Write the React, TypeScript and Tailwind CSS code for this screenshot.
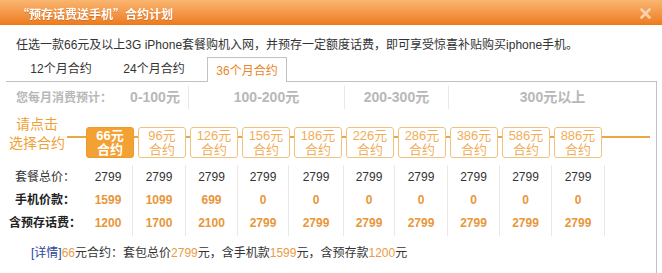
import React from "react";

type Plan = {
	fee: number;
	total: number;
	phone: number;
	deposit: number;
};

const PLANS: Plan[] = [
	{ fee: 66, total: 2799, phone: 1599, deposit: 1200 },
	{ fee: 96, total: 2799, phone: 1099, deposit: 1700 },
	{ fee: 126, total: 2799, phone: 699, deposit: 2100 },
	{ fee: 156, total: 2799, phone: 0, deposit: 2799 },
	{ fee: 186, total: 2799, phone: 0, deposit: 2799 },
	{ fee: 226, total: 2799, phone: 0, deposit: 2799 },
	{ fee: 286, total: 2799, phone: 0, deposit: 2799 },
	{ fee: 386, total: 2799, phone: 0, deposit: 2799 },
	{ fee: 586, total: 2799, phone: 0, deposit: 2799 },
	{ fee: 886, total: 2799, phone: 0, deposit: 2799 },
];

// table columns don't line up exactly with the buttons in the original
const COL_WIDTHS = [
	"w-[48px]",
	"w-[53px] border-l",
	"w-[52px] border-l",
	"w-[51px] border-l",
	"w-[55px] border-l",
	"w-[51px] border-l",
	"w-[53px] border-l",
	"w-[52px] border-l",
	"w-[52px] border-l",
	"w-[53px] border-l",
];

const TABS = ["12个月合约", "24个月合约", "36个月合约"];

function CloseIcon() {
	return (
		<svg width="11" height="11" viewBox="0 0 11 11" className="text-[#fad2ad]">
			<path d="M1.5 1.5 L9.5 9.5 M9.5 1.5 L1.5 9.5" stroke="currentColor" strokeWidth="2.6" strokeLinecap="round" />
		</svg>
	);
}

function PlanButton({ fee, active }: { fee: number; active: boolean }) {
	return (
		<div
			className={`mt-[12px] w-[48px] h-[31px] shrink-0 rounded-[3px] border flex flex-col items-center justify-center text-[13px] leading-[14px] ${
				active
					? "bg-[#f4a134] border-[#f0982c] text-white font-bold"
					: "bg-white border-[#f0c27e] text-[#f1ae5a]"
			}`}
		>
			<span>{fee}元</span>
			<span>合约</span>
		</div>
	);
}

function Connector({ width }: { width: string }) {
	return <div className={`mt-[21px] h-[2px] shrink-0 bg-[#eea546] ${width}`} />;
}

export default function App() {
	const selected = PLANS[0];

	return (
		<div className="w-[662px] h-[273px] overflow-hidden bg-white text-[12px] text-[#333] font-['Liberation_Sans','Noto_Sans_CJK_SC',sans-serif]">
			<div className="h-[25px] flex items-center justify-between pl-[17px] pr-[11px] pt-[2px] bg-gradient-to-b from-[#f9b56f] to-[#ed7a15]">
				<span className="text-white font-bold text-[12px] font-['Noto_Sans_CJK_SC',sans-serif] drop-shadow-[0_1px_0_rgba(160,70,0,0.35)]">
					“预存话费送手机”合约计划
				</span>
				<CloseIcon />
			</div>

			<p className="mt-[12px] pl-[16px] leading-[16px]">
				任选一款66元及以上3G iPhone套餐购机入网，并预存一定额度话费，即可享受惊喜补贴购买iphone手机。
			</p>

			<div className="ml-[6px] w-[651px] mt-[4px]">
				<div className="relative z-10 flex items-end h-[24px] pl-[15px] gap-[13px]">
					{TABS.map((tab, i) =>
						i === 2 ? (
							<div
								key={tab}
								className="w-[80px] h-[25px] -mb-px pt-[1px] flex items-center justify-center bg-white border border-b-0 border-[#c2c2c2] text-[#e98529]"
							>
								{tab}
							</div>
						) : (
							<div key={tab} className="w-[80px] h-[24px] flex items-center justify-center">
								{tab}
							</div>
						),
					)}
				</div>

				<div className="h-[192px] border-t border-r border-[#c2c2c2]">
					<div className="mt-[4px] h-[23px] flex text-[#b8b8b8] font-bold">
						<div className="w-[116px] pl-[10px] flex items-center text-[12px]">您每月消费预计：</div>
						<div className="w-[66px] flex items-center justify-center text-[14px]">0-100元</div>
						<div className="w-[156px] border-l border-[#e8e8e8] flex items-center justify-center text-[14px]">
							100-200元
						</div>
						<div className="w-[104px] border-l border-[#e8e8e8] flex items-center justify-center text-[14px]">
							200-300元
						</div>
						<div className="flex-1 border-l border-[#e8e8e8] flex items-center justify-center text-[14px]">
							300元以上
						</div>
					</div>

					<div className="mt-[6px] flex items-start">
						<div className="ml-[1px] w-[60px] shrink-0 whitespace-nowrap text-center text-[14px] leading-[19px] text-[#f0a135]">
							<div>请点击</div>
							<div>选择合约</div>
						</div>
						<Connector width="w-[19px]" />
						{PLANS.map((plan, i) => (
							<React.Fragment key={plan.fee}>
								{i > 0 && <Connector width="w-[4px]" />}
								<PlanButton fee={plan.fee} active={plan.fee === selected.fee} />
							</React.Fragment>
						))}
						<Connector width="w-[48px]" />
					</div>

					<div className="mt-[7px] flex">
						<div className="w-[78px] pb-[2px] flex flex-col">
							<div className="h-[23px] flex items-center justify-center">套餐总价：</div>
							<div className="h-[23px] flex items-center justify-center font-bold text-[#222]">手机价款：</div>
							<div className="h-[23px] flex items-center justify-center font-bold text-[#222]">含预存话费：</div>
						</div>
						{PLANS.map((plan, i) => (
							<div key={plan.fee} className={`${COL_WIDTHS[i]} border-[#e8e8e8] pb-[2px] flex flex-col`}>
								<div className="h-[23px] flex items-center justify-center">{plan.total}</div>
								<div className="h-[23px] flex items-center justify-center font-bold text-[#e9963b]">{plan.phone}</div>
								<div className="h-[23px] flex items-center justify-center font-bold text-[#e9963b]">{plan.deposit}</div>
							</div>
						))}
						<div className="w-[52px] border-l border-[#e8e8e8] h-[71px]" />
					</div>

					<p className="mt-[9px] pl-[25px] leading-[16px]">
						<span className="text-[#2c4597]">[详情]</span>
						<span className="text-[#ec9a45]">{selected.fee}</span>元合约：套包总价
						<span className="text-[#ec9a45]">{selected.total}</span>元，含手机款
						<span className="text-[#ec9a45]">{selected.phone}</span>元，含预存款
						<span className="text-[#ec9a45]">{selected.deposit}</span>元
					</p>
				</div>
			</div>
		</div>
	);
}
